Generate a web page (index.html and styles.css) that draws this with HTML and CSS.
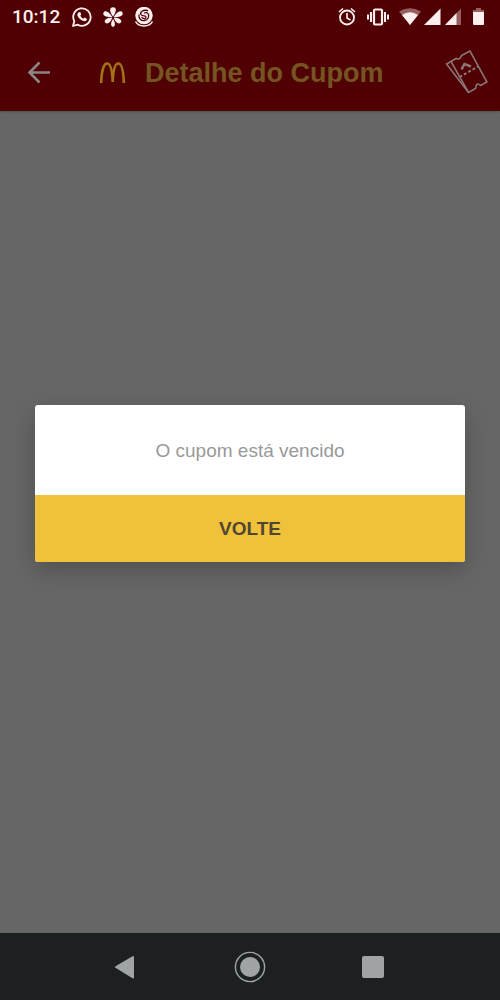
FILE: index.html
```
<!DOCTYPE html>
<html lang="pt-BR">
<head>
<meta charset="utf-8">
<meta name="viewport" content="width=device-width, initial-scale=1">
<title>Detalhe do Cupom</title>
<link rel="stylesheet" href="styles.css">
</head>
<body>
<div class="status">
  <time class="clock">10:12</time>
  <svg class="notice" viewBox="0 0 20 20" aria-hidden="true">
    <path d="M1 19 2.300 14.200A8.700 8.700 0 1 1 5.800 17.700Z" fill="none" stroke="#fff0ef" stroke-width="1.800" stroke-linejoin="round"/>
    <path d="M6.900 5.200 8.300 5.100 9.200 7.400 8.300 8.800Q9.200 10.700 11.400 11.800L12.600 10.600 14.900 11.700Q15 13.400 13.600 14.100C11 15 5.300 10.800 5.300 7.500Q5.400 6 6.900 5.200Z" fill="#fff0ef"/>
  </svg>
  <svg class="notice" viewBox="0 0 20 20" fill="#fff0ef" aria-hidden="true">
    <path d="M10 9.500C5.500 3.500 7 .2 10 .2S14.500 3.500 10 9.500Z"/>
    <path d="M9.300 10C2 10.500-.5 8 .5 5.700S5 3.500 9.300 10Z"/>
    <path d="M10.700 10C18 10.500 20.500 8 19.500 5.700S15 3.500 10.700 10Z"/>
    <path d="M9.300 10.600C7.500 16.500 4 17.500 2.200 15.700S3 10.500 9.300 10.600Z"/>
    <path d="M10.700 10.600C12.500 16.500 16 17.500 17.800 15.700S17 10.500 10.700 10.600Z"/>
    <path d="M10 12C7 16.500 8 19.800 10 19.800S13 16.500 10 12Z"/>
  </svg>
  <svg class="notice" viewBox="0 0 20 20" aria-hidden="true">
    <circle cx="10" cy="8.500" r="8.700" fill="#fff0ef"/>
    <path d="M1.500 14.500Q4 19 10 19T18.500 14.500" fill="none" stroke="#fff0ef" stroke-width="1.500"/>
    <path d="M13.500 3.500C9 2.500 5.500 5 7 7.500S12 8 12 10 9.500 12 8 10.500M5 8C4.500 12 7.500 14 10.500 13.500S15.500 10 14.500 7.500 11.500 5.500 10.500 6" fill="none" stroke="#500003" stroke-width="1.300" stroke-linecap="round"/>
  </svg>
  <svg class="system" viewBox="0 0 150 20" fill="#fff0ef" aria-hidden="true">
    <g fill="none" stroke="#fff0ef">
      <circle cx="11" cy="10.500" r="7" stroke-width="1.800"/>
      <path d="M11 6v5l3.500 2M3 5 7 1.500M19 5 15 1.500" stroke-width="1.600"/>
      <rect x="38" y="2.500" width="8" height="15" rx="1" stroke-width="2.200"/>
      <path d="M35 5v10M49 5v10M32 7.500v5M52 7.500v5" stroke-width="2"/>
    </g>
    <path d="M63 4.500Q74 -2 85 4.500L74 18Z" opacity=".4"/>
    <path d="M66 8Q74 2.500 82 8L74 18Z"/>
    <path d="M88 18 104.500 1.500V18Z"/>
    <path d="M109 18 125 1.500V18Z" opacity=".4"/>
    <path d="M109 18 120.500 6v12Z"/>
    <path d="M137 5V3h3V1h5v2h3v2Z" opacity=".4"/>
    <path d="M137 5h11v12q0 1-1 1h-9q-1 0-1-1Z"/>
  </svg>
</div>
<header class="appbar">
  <button class="plain back" aria-label="Voltar">
    <svg width="24" height="24" viewBox="0 0 24 24" fill="none" stroke="#8c8585" stroke-width="2.600" aria-hidden="true"><path d="M23 11.500H3M12.500 1.500 2.500 11.500l10 10"/></svg>
  </button>
  <svg class="arches" viewBox="0 0 28 22" aria-hidden="true">
    <path d="M2.200 21C2.500 9 4.800 1.500 8.200 1.500S13.200 8 13.700 20C14.200 8 15.800 1.500 19.200 1.500S24.500 9 24.800 21" fill="none" stroke="#a07414" stroke-width="2.600"/>
  </svg>
  <h1 class="title">Detalhe do Cupom</h1>
  <button class="plain coupons" aria-label="Cupons">
    <svg width="44" height="46" viewBox="0 0 44 46" fill="none" stroke="#8c7476" stroke-width="1.600" aria-hidden="true">
      <path d="M7 11.500 12 8.500Q16 10.500 17.500 5.500L26 1 43 32 36.500 35.500Q32.500 31.500 31.500 38.500L24.500 42.500Z"/>
      <path d="M7 11.500 2.500 14 24.500 42.500"/>
      <path d="M15.500 27 34 16.500" stroke-width="2" stroke-dasharray="3 2"/>
      <path d="M17.500 19.500 20.500 14 27 16.500" stroke-width="2.600"/>
    </svg>
  </button>
</header>
<main class="content">
  <section class="dialog" role="alertdialog" aria-modal="true" aria-labelledby="message">
    <p class="message" id="message">O cupom está vencido</p>
    <button class="action">VOLTE</button>
  </section>
</main>
<nav class="navbar" aria-label="Sistema">
  <button class="plain" aria-label="Voltar"><svg width="32" height="32" viewBox="0 0 32 32" fill="#a0a4a4" stroke="#a0a4a4" stroke-width="2" stroke-linejoin="round" aria-hidden="true"><path d="M22 6v20.500L5 16Z"/></svg></button>
  <button class="plain" aria-label="Início"><svg width="32" height="32" viewBox="0 0 32 32" aria-hidden="true"><circle cx="16" cy="16" r="14.600" fill="none" stroke="#a0a4a4" stroke-width="1.400"/><circle cx="16" cy="16" r="10" fill="#a0a4a4"/></svg></button>
  <button class="plain" aria-label="Recentes"><svg width="32" height="32" viewBox="0 0 32 32" fill="#a0a4a4" aria-hidden="true"><rect x="5" y="5" width="22" height="22" rx="2"/></svg></button>
</nav>
</body>
</html>
```
FILE: styles.css
```
* {
  box-sizing: border-box;
}

body {
  margin: 0;
  min-height: 100vh;
  display: flex;
  flex-direction: column;
  background: #666;
  font-family: "Liberation Sans", Arial, sans-serif;
}

.status {
  display: flex;
  align-items: center;
  gap: 11px;
  height: 34px;
  padding: 0 14px 0 12px;
  background: #500003;
}

.clock {
  margin-right: 1px;
  color: #fff0ef;
  font: 500 19px/24px Roboto, sans-serif;
}

.notice {
  width: 20px;
  height: 20px;
}

.system {
  width: 150px;
  height: 20px;
  margin-left: auto;
}

.plain {
  display: flex;
  padding: 0;
  border: 0;
  background: none;
  cursor: pointer;
}

.appbar {
  display: flex;
  align-items: center;
  height: 77px;
  padding: 0 12px 0 27px;
  background: #500003;
  box-shadow: 0 1px 2px rgba(0, 0, 0, 0.2);
}

.arches {
  width: 28px;
  height: 22px;
  margin: 0 18px 0 48px;
}

.title {
  margin: 0;
  color: #745522;
  font-size: 27px;
  line-height: 32px;
  white-space: nowrap;
}

.coupons {
  margin-left: auto;
}

.content {
  flex: 1;
  display: flex;
  flex-direction: column;
  justify-content: center;
  padding: 0 35px 77px;
}

.dialog {
  overflow: hidden;
  border-radius: 3px;
  background: #fff;
  box-shadow: 0 8px 24px rgba(0, 0, 0, 0.22);
}

.message {
  margin: 0;
  padding: 34px 16px 32px;
  color: #999;
  font-size: 19px;
  line-height: 24px;
  text-align: center;
}

.action {
  display: block;
  width: 100%;
  padding: 22px 16px;
  border: 0;
  background: #f0c23b;
  color: #514631;
  font: bold 19px/23px "Liberation Sans", Arial, sans-serif;
  cursor: pointer;
}

.navbar {
  display: flex;
  align-items: center;
  justify-content: space-between;
  height: 67px;
  padding: 0 111px;
  background: #1c2021;
}
```
